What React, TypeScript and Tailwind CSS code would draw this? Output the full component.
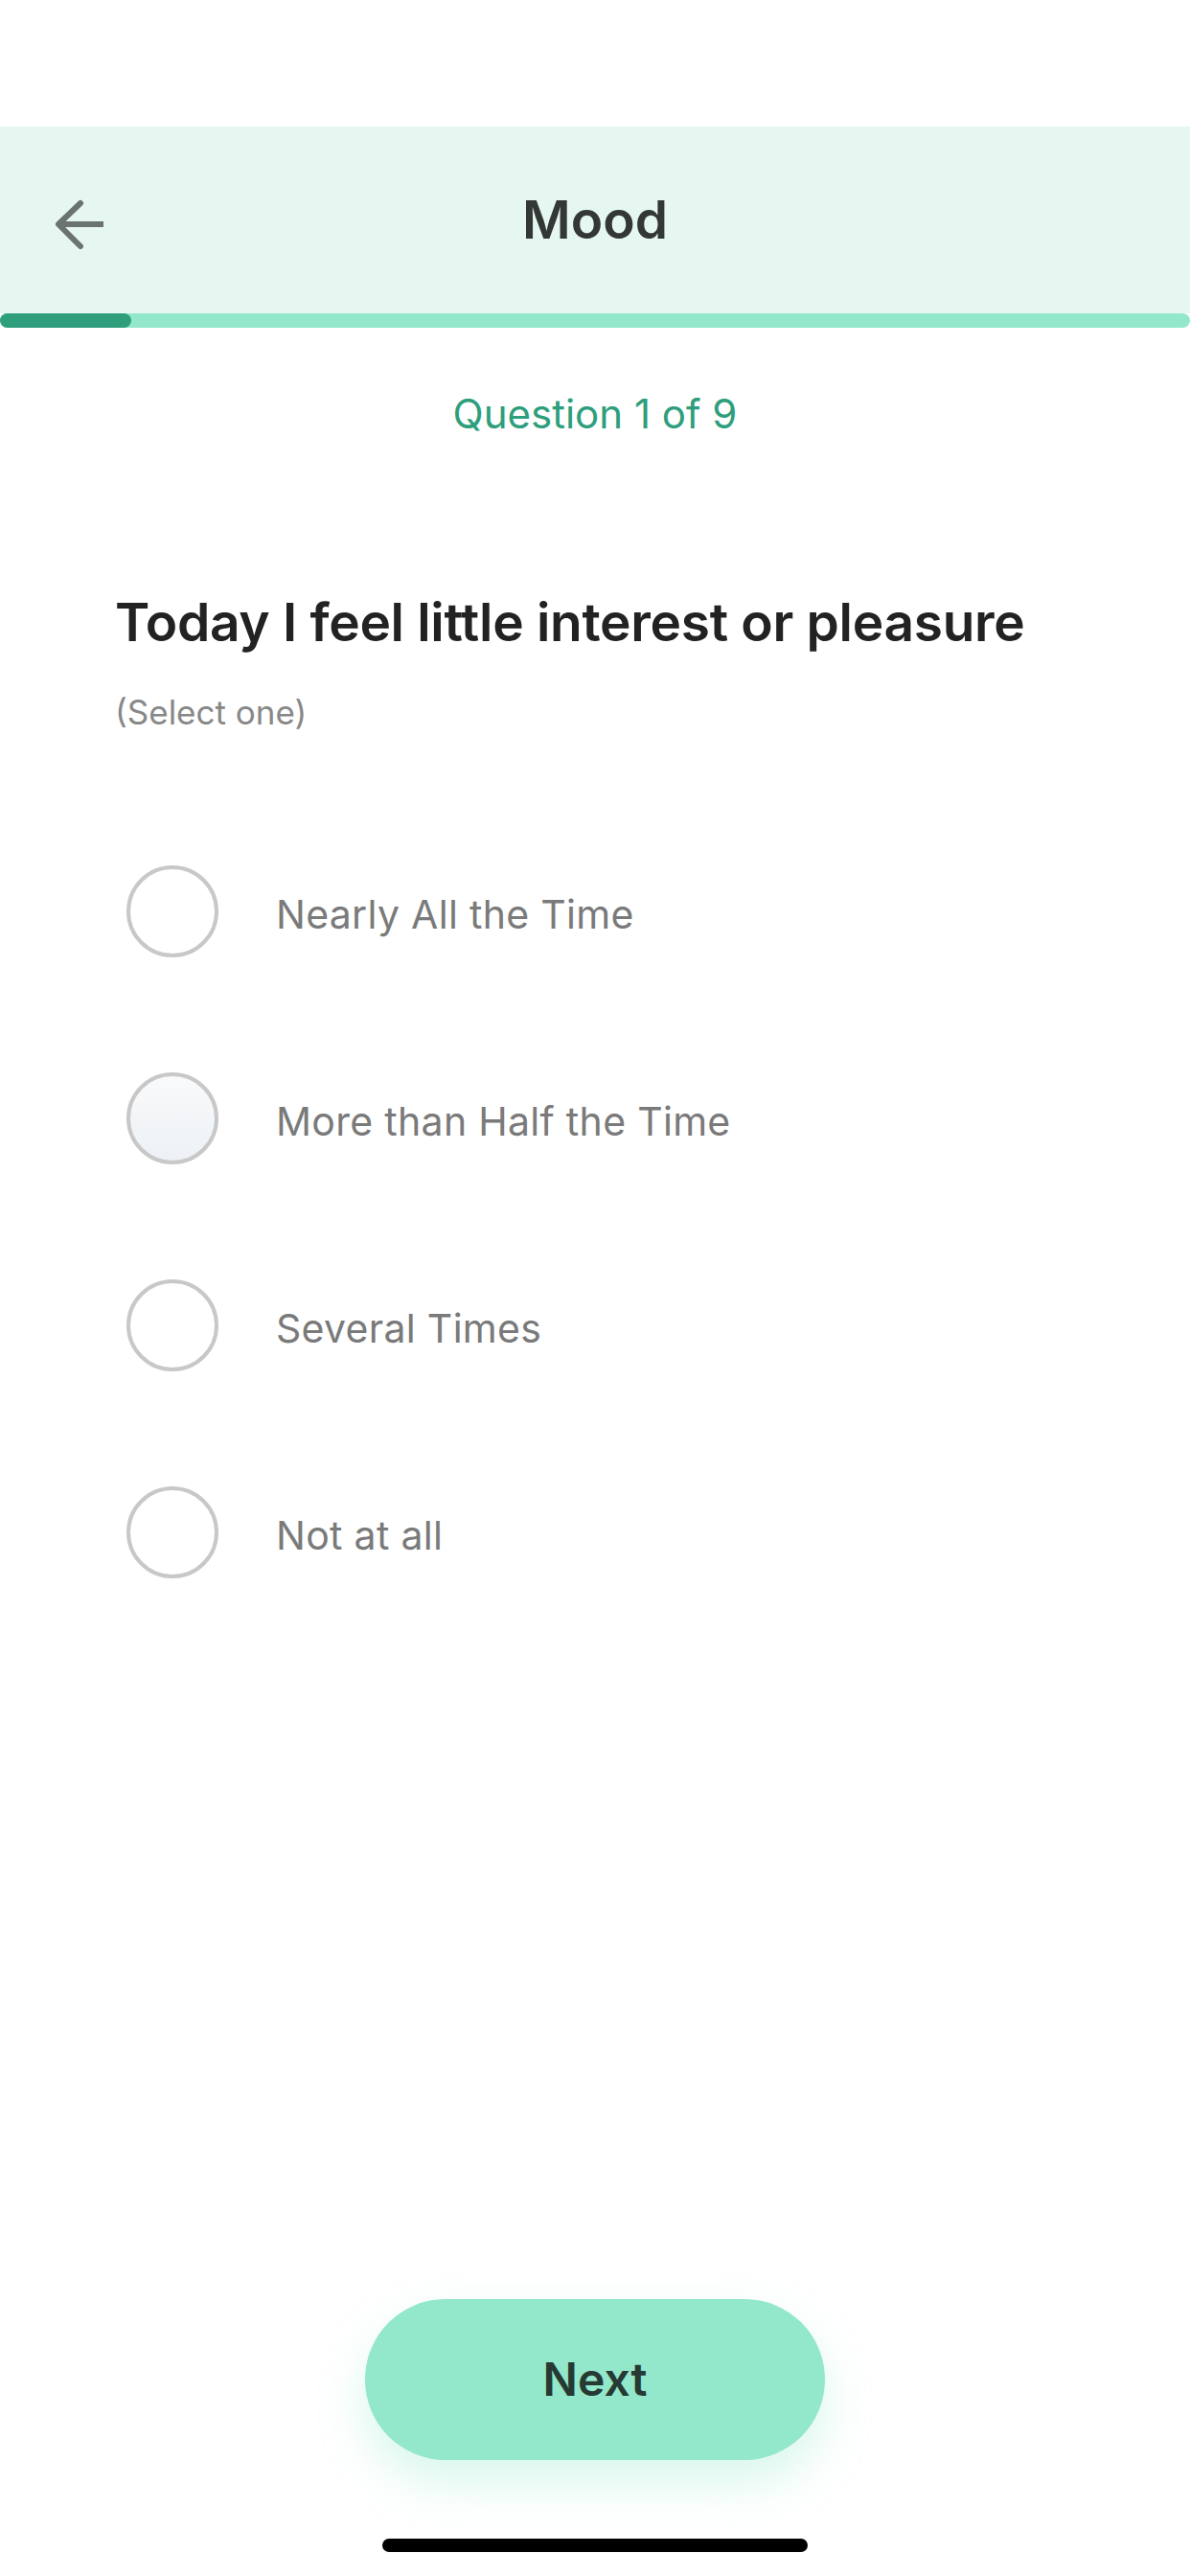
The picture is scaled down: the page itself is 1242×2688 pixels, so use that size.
import React from 'react'

const options = [
    "Nearly All the Time",
    "More than Half the Time",
    "Several Times",
    "Not at all",
]

function BackArrow () {
    return (
        <svg width="52" height="52" viewBox="0 0 52 52" fill="none">
            <path d="M27 4 L4 26 L27 49" stroke="#6b736f" strokeWidth="6" strokeLinecap="round" strokeLinejoin="round" />
            <path d="M6 26 H51" stroke="#6b736f" strokeWidth="6" strokeLinecap="butt" />
        </svg>
    )
}

export default function App () {
    const [selected, setSelected] = React.useState(-1);
    const hovered = 1;

    return (
        <div className="w-[1242px] h-[2688px] bg-white flex flex-col font-['Inter','Liberation_Sans',sans-serif]">
            {/* status bar space */}
            <div className="h-[132px]" />

            <div className="h-[195px] bg-[#e6f7f1] flex items-center relative">
                <div className="absolute left-[57px] top-[76px]">
                    <BackArrow />
                </div>
                <p className="flex-1 text-center text-[55px] font-semibold text-[#333835] leading-none">Mood</p>
            </div>

            <div className="h-[15px] bg-[#93e7cb] rounded-full relative">
                <div className="h-[15px] w-[137px] bg-[#2e9e7c] rounded-full" />
            </div>

            <p className="mt-[65px] text-center text-[42px] leading-[50px] text-[#2e9e7c]">Question 1 of 9</p>

            <div className="pl-[120px] pr-[60px]">
                <p className="mt-[159px] text-[55px] leading-[66px] font-semibold text-[#222222] tracking-[-0.3px]">Today I feel little interest or pleasure</p>
                <p className="mt-[41px] text-[35px] leading-[40px] text-[#888888]">(Select one)</p>

                <div className="mt-[80px] flex flex-col">
                    {options.map((opt, i) => (
                        <div key={opt} onClick={() => setSelected(i)} className="h-[216px] flex items-center gap-x-[60px] pl-[12px] cursor-pointer">
                            <div className={`w-[96px] h-[96px] rounded-full border-[4px] border-[#c8c8c8] ${i === hovered ? "bg-gradient-to-b from-[#f9fafb] to-[#edf1f5]" : "bg-white"} ${selected === i ? "border-[#2e9e7c]" : ""}`} />
                            <p className="pt-[6px] text-[41px] tracking-[0.3px] text-[#7a7a7a] leading-none">{opt}</p>
                        </div>
                    ))}
                </div>
            </div>

            <div className="mt-auto flex justify-center">
                <button className="w-[480px] h-[168px] rounded-full bg-[#93e7cb] text-[48px] font-semibold text-[#263a33] shadow-[0_24px_48px_rgba(147,231,203,0.35)]">Next</button>
            </div>

            <div className="mt-[82px] mb-[25px] flex justify-center">
                <div className="w-[444px] h-[14px] rounded-full bg-black" />
            </div>
        </div>
    )
}
